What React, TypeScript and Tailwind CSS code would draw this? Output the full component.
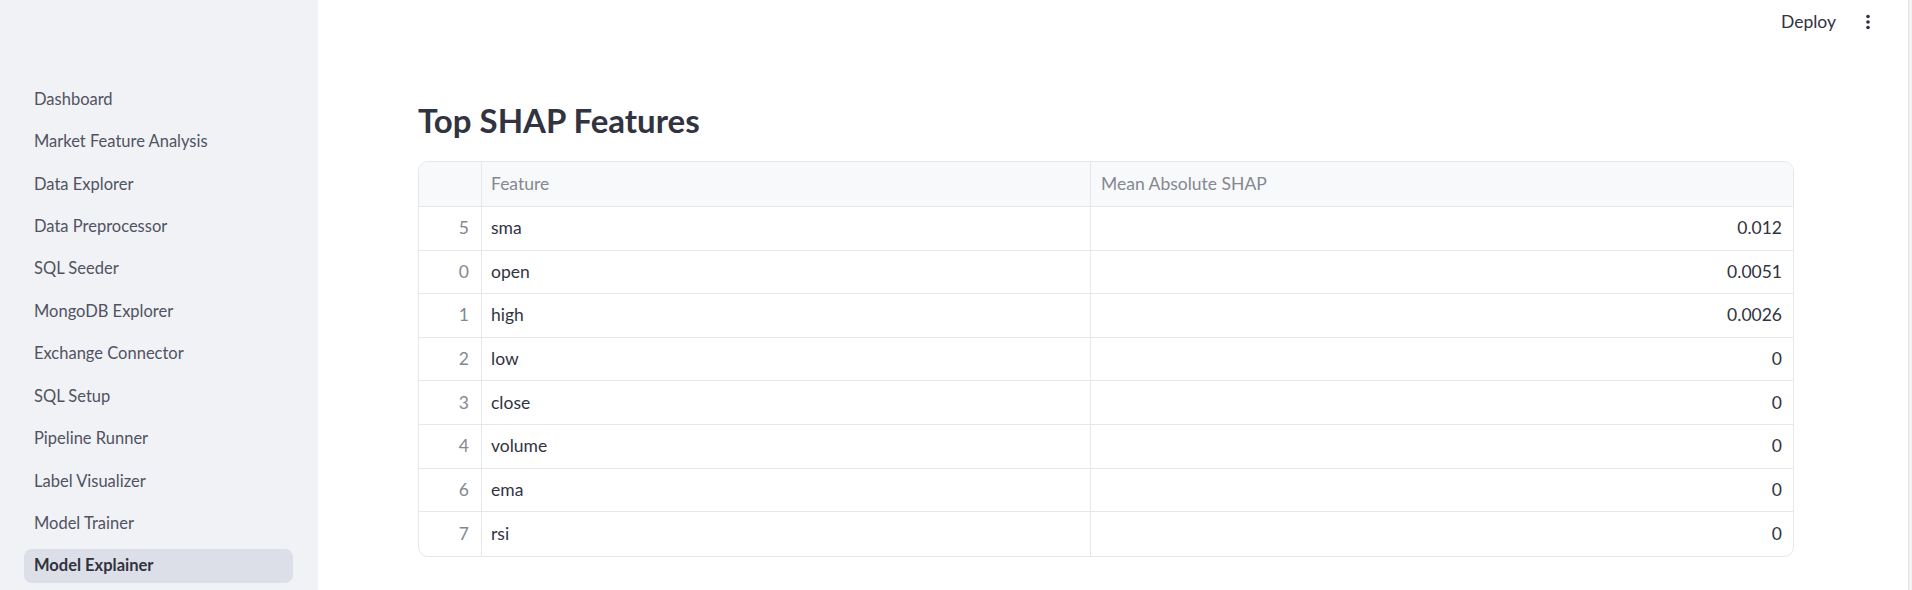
const pages = [
  'Dashboard',
  'Market Feature Analysis',
  'Data Explorer',
  'Data Preprocessor',
  'SQL Seeder',
  'MongoDB Explorer',
  'Exchange Connector',
  'SQL Setup',
  'Pipeline Runner',
  'Label Visualizer',
  'Model Trainer',
  'Model Explainer',
];

const rows: [number, string, string][] = [
  [5, 'sma', '0.012'],
  [0, 'open', '0.0051'],
  [1, 'high', '0.0026'],
  [2, 'low', '0'],
  [3, 'close', '0'],
  [4, 'volume', '0'],
  [6, 'ema', '0'],
  [7, 'rsi', '0'],
];

const font = { fontFamily: 'Lato, "Open Sans", sans-serif' };

const Sidebar = () => {
  return (
    <aside className="w-[318px] shrink-0 bg-[#f0f2f6] pt-[82px] pl-[24px] pr-[25px]">
      <nav className="flex flex-col gap-[8.45px]">
        {pages.map((p) => {
          const active = p === 'Model Explainer';
          return (
            <div
              key={p}
              className={
                active
                  ? 'h-[34px] flex items-center rounded-[8px] bg-[#dcdfe8] pl-[10px] text-[16.5px] font-bold text-[#31333f]'
                  : 'h-[34px] flex items-center rounded-[8px] pl-[10px] text-[16.5px] text-[#505361]'
              }
            >
              {p}
            </div>
          );
        })}
      </nav>
    </aside>
  );
};

const MoreIcon = () => (
  <svg width="22" height="22" viewBox="0 0 24 24" fill="#31333f">
    <circle cx="12" cy="6" r="2" />
    <circle cx="12" cy="12" r="2" />
    <circle cx="12" cy="18" r="2" />
  </svg>
);

const ShapTable = () => {
  return (
    <div className="w-[1376px] rounded-[10px] border border-[#e6e7eb] overflow-hidden text-[17.5px]">
      <div className="grid grid-cols-[63px_609px_1fr] h-[45px] bg-[#f8f9fb] border-b border-[#e6e7eb] text-[#858791]">
        <div className="border-r border-[#e6e7eb]" />
        <div className="flex items-center pl-[9px] border-r border-[#e6e7eb]">Feature</div>
        <div className="flex items-center pl-[10px]">Mean Absolute SHAP</div>
      </div>
      {rows.map(([idx, name, val], i) => (
        <div
          key={idx}
          className={
            i < rows.length - 1
              ? 'grid grid-cols-[63px_609px_1fr] h-[43.6px] border-b border-[#e6e7eb] text-[#31333f]'
              : 'grid grid-cols-[63px_609px_1fr] h-[43.6px] text-[#31333f]'
          }
        >
          <div className="flex items-center justify-end pr-[12px] border-r border-[#e6e7eb] text-[#858791]">
            {idx}
          </div>
          <div className="flex items-center pl-[9px] border-r border-[#e6e7eb]">{name}</div>
          <div className="flex items-center justify-end pr-[11px]">{val}</div>
        </div>
      ))}
    </div>
  );
};

export default function App() {
  return (
    <div className="flex h-[590px] w-[1912px] overflow-hidden bg-white" style={font}>
      <Sidebar />
      <main className="flex-1 flex flex-col">
        <header className="h-[44px] flex items-center justify-end pr-[29px] gap-[21px] text-[17.5px] text-[#31333f]">
          <span>Deploy</span>
          <MoreIcon />
        </header>
        <div className="pl-[100px] pt-[54px]">
          <h2 className="text-[33px] leading-[44px] font-bold text-[#31333f] mb-[19px]">Top SHAP Features</h2>
          <ShapTable />
        </div>
      </main>
      <div className="w-[4px] shrink-0 bg-[#f3f3f3] border-l border-[#e3e3e3]" />
    </div>
  );
}
